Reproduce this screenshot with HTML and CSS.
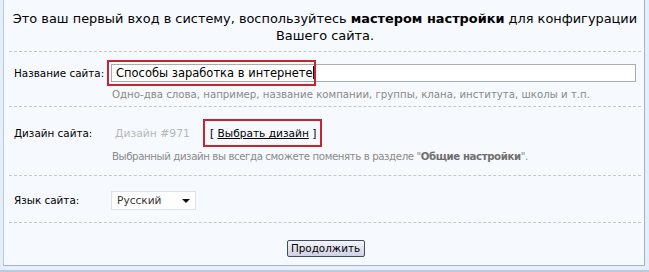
FILE: index.html
```html
<!DOCTYPE html>
<html lang="ru">
<head>
<meta charset="utf-8">
<link rel="stylesheet" href="styles.css">
</head>
<body>
<div class="frame">
  <div class="panel">
    <p class="intro">Это ваш первый вход в систему, воспользуйтесь <b>мастером настройки</b> для конфигурации Вашего сайта.</p>
    <div class="row row-name">
      <div class="label">Название сайта:</div>
      <div class="field">
        <div class="hl-input"><div class="input">Способы заработка в интернете<span class="caret"></span></div></div>
        <div class="hint hint-name">Одно-два слова, например, название компании, группы, клана, института, школы и т.п.</div>
      </div>
    </div>
    <div class="row row-design">
      <div class="label label-design">Дизайн сайта:</div>
      <div class="field">
        <div class="design-line">
          <span class="design-name">Дизайн #971</span>
          <span class="hl-link">[ <a href="#">Выбрать дизайн</a> ]</span>
        </div>
        <div class="hint hint-design">Выбранный дизайн вы всегда сможете поменять в разделе "<b>Общие настройки</b>".</div>
      </div>
    </div>
    <div class="row row-lang">
      <div class="label">Язык сайта:</div>
      <div class="field">
        <div class="select">Русский<span class="arrow"></span></div>
      </div>
    </div>
    <div class="actions">
      <button class="btn">Продолжить</button>
    </div>
  </div>
</div>
</body>
</html>
```
FILE: styles.css
```css
html, body {
  margin: 0;
  padding: 0;
  background: #ffffff;
}
body {
  font-family: "DejaVu Sans", sans-serif;
  color: #000;
}
.frame {
  width: 649px;
  height: 272px;
  box-sizing: border-box;
  padding: 0 4px 4px 3px;
  background: #e6eef8;
  border-bottom: 2px solid #b9c9de;
}
.panel {
  height: 100%;
  box-sizing: border-box;
  background: #f6f9fd;
  border-left: 1px solid #b7cbe2;
  border-right: 1px solid #9fb6d2;
  border-bottom: 1px solid #9fb6d2;
  padding: 0 3px 0 5px;
}
.intro {
  margin: 0;
  padding: 10px 0 7px;
  text-align: center;
  font-size: 12.9px;
  line-height: 17px;
  border-bottom: 1px dashed #c4c8cc;
}
.row {
  display: flex;
  border-bottom: 1px dashed #c4c8cc;
}
.row-name { padding: 8px 0 4px; }
.row-design { padding: 12px 0 11px; }
.row-lang { padding: 15px 0 12px; }
.label {
  width: 98px;
  flex: none;
  padding-left: 5px;
  box-sizing: border-box;
  white-space: nowrap;
  font-size: 10.4px;
  line-height: 18px;
}
.row-name .label { padding-top: 4px; }
.label-design { line-height: 28px; }
.field {
  flex: 1;
  min-width: 0;
}
.hl-input {
  position: relative;
  padding: 4px 5px 4px 4px;
}
.hl-input::before {
  content: "";
  position: absolute;
  left: 0;
  top: 0;
  width: 209px;
  height: 26px;
  border: 2px solid #c8242d;
  box-sizing: border-box;
  pointer-events: none;
}
.input {
  height: 18px;
  box-sizing: border-box;
  border: 1px solid #a5acb2;
  background: #ffffff;
  font-size: 11.5px;
  line-height: 16px;
  padding-left: 4px;
  white-space: nowrap;
}
.caret {
  display: inline-block;
  width: 1px;
  height: 13px;
  background: #000;
  vertical-align: -2px;
}
.hint {
  margin-left: 5px;
  font-size: 10.2px;
  line-height: 14px;
  color: #8a8a8a;
  white-space: nowrap;
}
.hint-name { margin-top: 2px; }
.hint-design { margin-top: 3px; letter-spacing: -0.4px; }
.hint b { color: #6f6f6f; }
.design-line {
  display: flex;
  align-items: center;
  height: 28px;
  font-size: 10.8px;
}
.design-name {
  color: #b8b8b8;
  margin-left: 8px;
  width: 88px;
  flex: none;
}
.hl-link {
  display: inline-block;
  height: 28px;
  width: 119px;
  box-sizing: border-box;
  border: 2px solid #c8242d;
  padding-left: 5px;
  line-height: 24px;
  font-size: 10.6px;
  white-space: nowrap;
  color: #000;
}
.hl-link a { color: #000; }
.select {
  position: relative;
  margin-left: 4px;
  width: 85px;
  height: 19px;
  box-sizing: border-box;
  border: 1px solid #dde2e7;
  background: #ffffff;
  font-size: 10.6px;
  line-height: 17px;
  padding-left: 5px;
  color: #333;
}
.arrow {
  position: absolute;
  right: 5px;
  top: 7px;
  border-left: 4px solid transparent;
  border-right: 4px solid transparent;
  border-top: 4px solid #111;
}
.actions {
  text-align: center;
  padding-top: 14px;
}
.btn {
  font-family: "DejaVu Sans", sans-serif;
  font-size: 10.4px;
  height: 17px;
  width: 78px;
  padding: 0;
  line-height: 13px;
  border: 1px solid #3d4d63;
  border-radius: 2px;
  background: linear-gradient(#f4f4fa, #cfd0e4);
  color: #000;
  margin-left: 1px;
}
```
